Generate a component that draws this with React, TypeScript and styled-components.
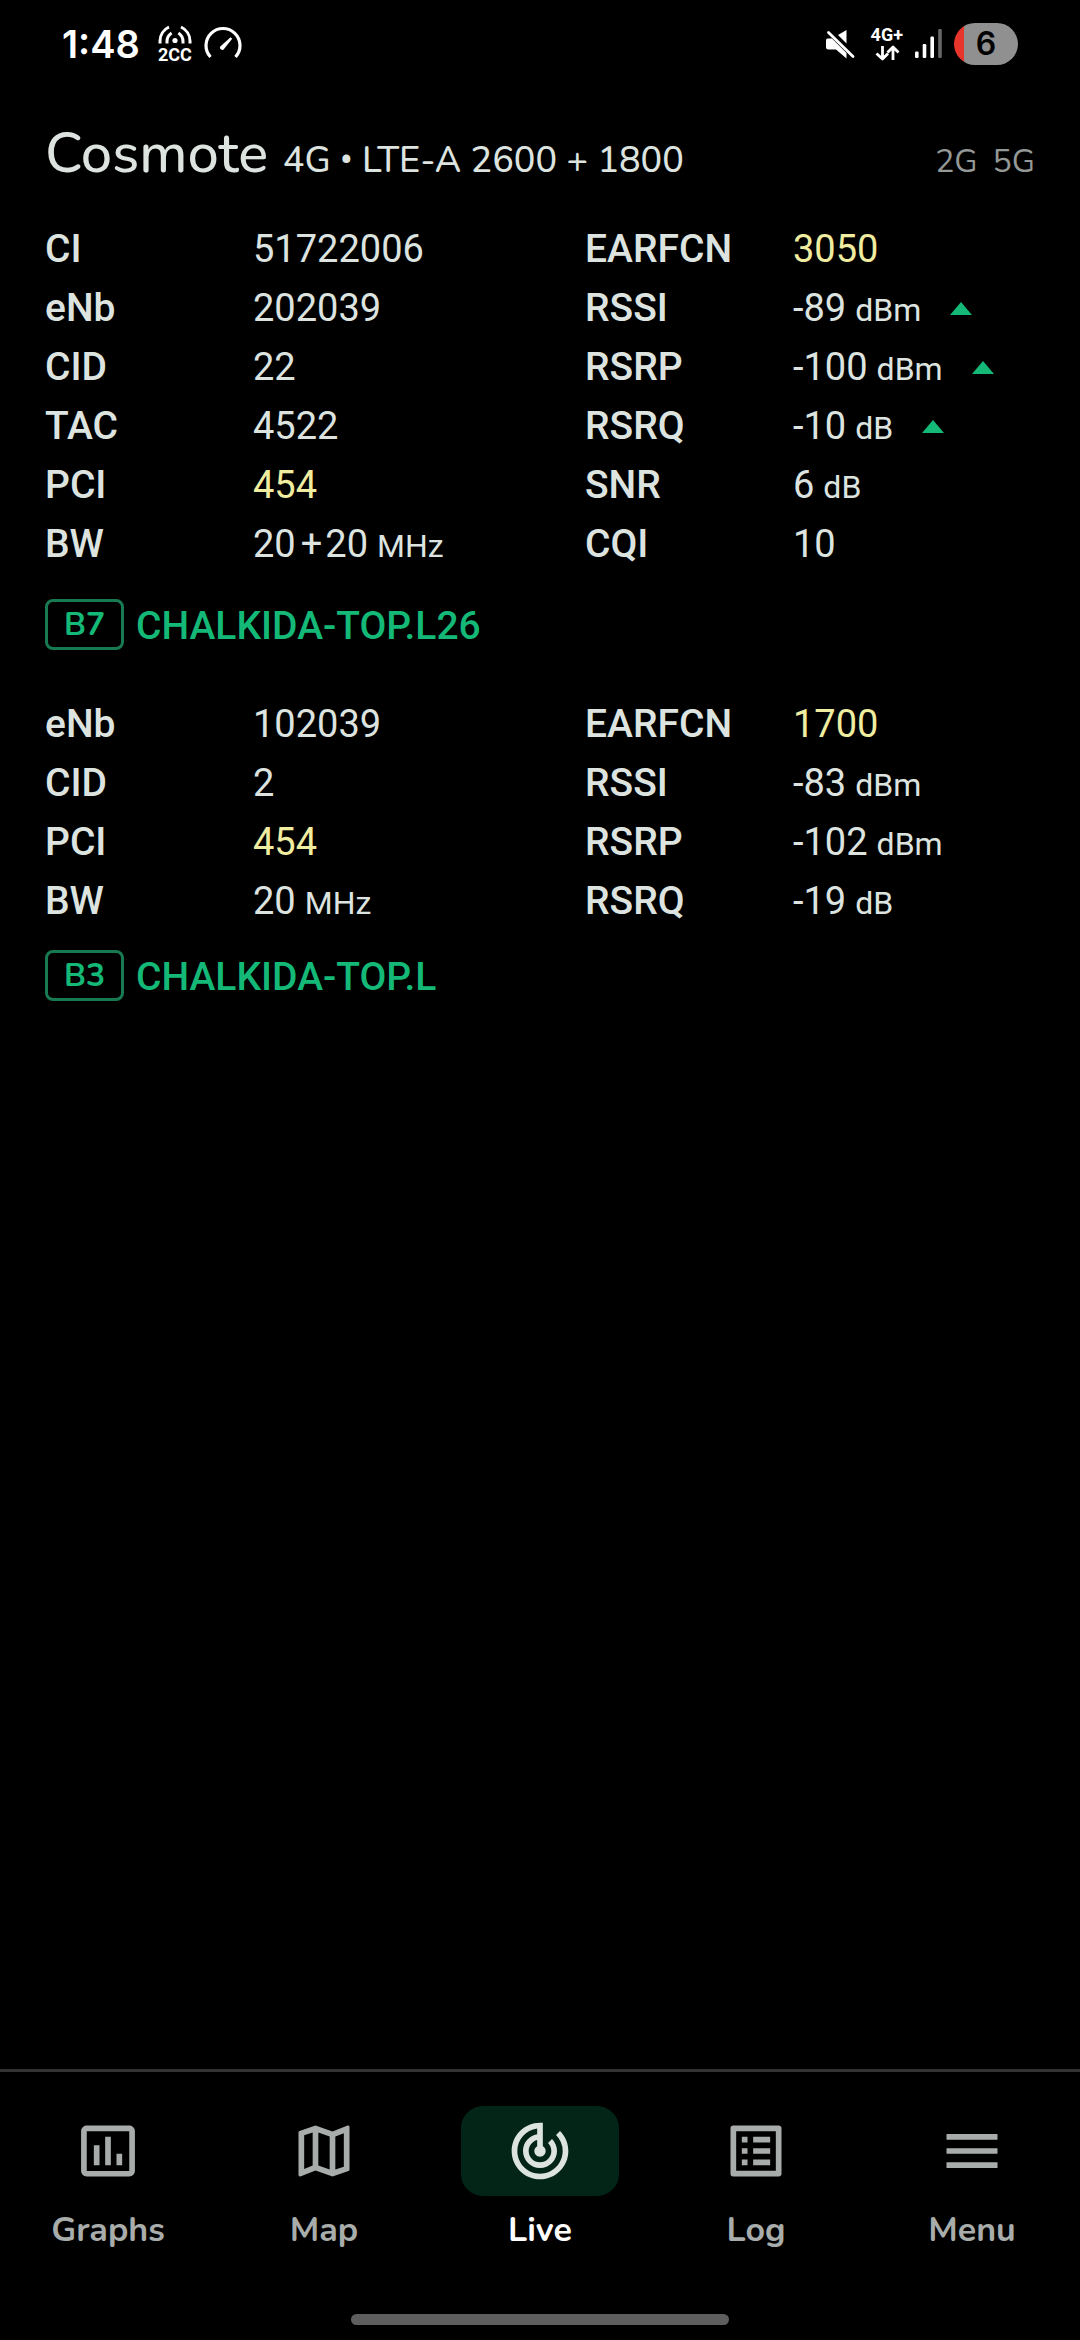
import React, { Fragment, useState } from "react";
import styled, { createGlobalStyle } from "styled-components";
import {
  MdInsertChartOutlined,
  MdListAlt,
  MdMenu,
  MdOutlineMap,
  MdTrackChanges,
} from "react-icons/md";

const color = {
  text: "#dde4e0",
  muted: "#a8adab",
  faint: "#949997",
  yellow: "#f0eca0",
  green: "#14b877",
  greenBorder: "#187a50",
  pill: "#032518",
  line: "#333333",
};

const data = `Roboto, "Liberation Sans", sans-serif`;
const ui = `Nunito, Lato, "Open Sans", sans-serif`;
const system = `Inter, Roboto, sans-serif`;

const GlobalStyle = createGlobalStyle`
  *, *::before, *::after { box-sizing: border-box; }
  body { margin: 0; background: #000; color: ${color.text}; }
  svg { display: block; flex: none; }
`;

const Screen = styled.div`
  display: flex;
  flex-direction: column;
  min-height: 100vh;
  font-family: ${data};
`;

/* ---------- status bar ---------- */

const StatusBar = styled.div`
  display: flex;
  align-items: center;
  justify-content: space-between;
  height: 88px;
  padding: 0 62px;
  color: #fff;
  font-family: ${system};
`;

const StatusGroup = styled.div`
  display: flex;
  align-items: center;
  gap: 12px;
`;

const Clock = styled.time`
  margin-right: 6px;
  font-size: 38px;
  font-weight: 600;
  line-height: 44px;
`;

const StackedIcon = styled.div`
  display: flex;
  flex-direction: column;
  align-items: center;
  gap: 2px;
`;

const TinyLabel = styled.span`
  font-family: Roboto, sans-serif;
  font-size: 18px;
  font-weight: 700;
  line-height: 16px;
`;

const Battery = styled.div`
  display: grid;
  place-items: center;
  width: 64px;
  height: 42px;
  border-radius: 21px;
  background: linear-gradient(90deg, #e8352b 10px, #909090 10px);
  color: #000;
  font-size: 32px;
  font-weight: 600;
  line-height: 42px;
`;

/* ---------- header ---------- */

const Header = styled.header`
  display: flex;
  align-items: baseline;
  justify-content: space-between;
  padding: 34px 45px;
  font-family: ${ui};
  line-height: 64px;
`;

const Operator = styled.h1`
  margin: 0;
  font-size: 56px;
  font-weight: 500;
`;

const Network = styled.span`
  font-size: 36px;
  line-height: 1;
`;

const Bullet = styled.span`
  font-family: ${data};
`;

const OtherNetworks = styled.div`
  display: flex;
  gap: 15px;
  color: ${color.faint};
  font-size: 32px;
  font-weight: 400;
  line-height: 44px;
`;

/* ---------- cells ---------- */

const Main = styled.main`
  display: flex;
  flex: 1;
  flex-direction: column;
  gap: 45px;
  padding: 0 45px;
`;

const Cell = styled.section<{ $gap: number }>`
  display: flex;
  flex-direction: column;
  gap: ${(p) => p.$gap}px;
`;

const Readings = styled.dl`
  display: grid;
  grid-template-columns: 208px 332fr 208px 242fr;
  margin: 0;
  font-size: 38px;
  line-height: 59px;
`;

const Label = styled.dt`
  font-size: 39px;
  font-weight: 500;
`;

const Value = styled.dd<{ $highlight?: boolean }>`
  display: flex;
  align-items: baseline;
  margin: 0;
  color: ${(p) => (p.$highlight ? color.yellow : "inherit")};
  white-space: nowrap;
`;

const Plus = styled.span`
  padding: 0 3px 0 5px;
`;

const Unit = styled.span`
  margin-left: 9px;
  font-size: 32px;
  line-height: 38px;
`;

const Trend = styled.svg`
  align-self: center;
  margin-left: 29px;
  fill: ${color.green};
`;

const Site = styled.div`
  display: flex;
  align-items: center;
  gap: 12px;
  color: ${color.green};
  font-weight: 500;
`;

const Band = styled.span`
  width: 79px;
  border: 3px solid ${color.greenBorder};
  border-radius: 8px;
  font-family: ${ui};
  font-size: 32px;
  font-weight: 700;
  line-height: 45px;
  text-align: center;
`;

const SiteName = styled.span`
  padding-top: 4px;
  font-size: 39px;
  line-height: 47px;
`;

/* ---------- bottom navigation ---------- */

const Nav = styled.nav`
  display: grid;
  grid-template-columns: repeat(5, 1fr);
  padding-top: 34px;
  border-top: 3px solid ${color.line};
`;

const Pill = styled.span<{ $active: boolean }>`
  display: grid;
  place-items: center;
  width: 158px;
  height: 90px;
  border-radius: 22px;
  background: ${(p) => (p.$active ? color.pill : "transparent")};
  color: ${(p) => (p.$active ? color.text : color.muted)};
`;

const NavButton = styled.button<{ $active: boolean }>`
  display: flex;
  flex-direction: column;
  align-items: center;
  gap: 12px;
  padding: 0;
  border: 0;
  background: none;
  color: ${(p) => (p.$active ? "#fff" : color.muted)};
  font-family: ${ui};
  font-size: 34px;
  font-weight: 700;
  line-height: 44px;
  cursor: pointer;
`;

const HomeHandle = styled.div`
  align-self: center;
  width: 35%;
  height: 11px;
  margin: 62px 0 15px;
  border-radius: 6px;
  background: #5e5e5e;
`;

type Reading = {
  label: string;
  value: string;
  plus?: string;
  unit?: string;
  highlight?: boolean;
  rising?: boolean;
};

type CellInfo = { band: string; site: string; gap: number; readings: Reading[] };

const cells: CellInfo[] = [
  {
    band: "B7",
    site: "CHALKIDA-TOP.L26",
    gap: 25,
    readings: [
      { label: "CI", value: "51722006" },
      { label: "EARFCN", value: "3050", highlight: true },
      { label: "eNb", value: "202039" },
      { label: "RSSI", value: "-89", unit: "dBm", rising: true },
      { label: "CID", value: "22" },
      { label: "RSRP", value: "-100", unit: "dBm", rising: true },
      { label: "TAC", value: "4522" },
      { label: "RSRQ", value: "-10", unit: "dB", rising: true },
      { label: "PCI", value: "454", highlight: true },
      { label: "SNR", value: "6", unit: "dB" },
      { label: "BW", value: "20", plus: "20", unit: "MHz" },
      { label: "CQI", value: "10" },
    ],
  },
  {
    band: "B3",
    site: "CHALKIDA-TOP.L",
    gap: 19,
    readings: [
      { label: "eNb", value: "102039" },
      { label: "EARFCN", value: "1700", highlight: true },
      { label: "CID", value: "2" },
      { label: "RSSI", value: "-83", unit: "dBm" },
      { label: "PCI", value: "454", highlight: true },
      { label: "RSRP", value: "-102", unit: "dBm" },
      { label: "BW", value: "20", unit: "MHz" },
      { label: "RSRQ", value: "-19", unit: "dB" },
    ],
  },
];

const tabs = [
  { name: "Graphs", Icon: MdInsertChartOutlined },
  { name: "Map", Icon: MdOutlineMap },
  { name: "Live", Icon: MdTrackChanges },
  { name: "Log", Icon: MdListAlt },
  { name: "Menu", Icon: MdMenu },
];

const Waves = () => (
  <svg width="34" height="20" viewBox="0 0 34 20" fill="none" stroke="#fff" strokeWidth="3">
    <path d="M2 18.5V16C2 10 5.500 4.500 11 2M32 18.500V16C32 10 28.500 4.500 23 2" />
    <path d="M9 18.500V16.500C9 12.500 10.800 9.800 13.600 8M25 18.500V16.500C25 12.500 23.200 9.800 20.400 8" />
    <circle cx="17" cy="15.500" r="2.600" fill="#fff" stroke="none" />
  </svg>
);

const Gauge = () => (
  <svg width="38" height="36" viewBox="0 0 38 36">
    <path d="M6.500 31A17 17 0 1 1 31.500 31" fill="none" stroke="#fff" strokeWidth="3.200" />
    <path d="M16.300 20.600 26.600 11.200 28.200 12.700 19.400 23.700C17.600 24.900 15 22.400 16.300 20.600Z" fill="#fff" />
  </svg>
);

const Muted = () => (
  <svg width="34" height="30" viewBox="0 0 34 30" fill="#fff">
    <path d="M13 6 21.500 1V14.500Z" />
    <path d="M2.500 9.500H7L21.500 24V29.500L11 20.500H3.500Q1 20.500 1 18V11.500Q1 9.500 2.500 9.500Z" />
    <path d="M3.500 3.500 28 27.500" stroke="#fff" strokeWidth="2.800" strokeLinecap="round" />
  </svg>
);

const Arrows = () => (
  <svg width="26" height="16" viewBox="0 0 26 16" fill="none" stroke="#fff" strokeWidth="2.800" strokeLinejoin="round">
    <path d="M8.500 1V14M2.500 8.500 8.500 14 14 8.500M19 15V2M13.500 7.500 19 2 24.500 7.500" />
  </svg>
);

const Signal = () => (
  <svg width="27" height="30" viewBox="0 0 27 30" fill="#fff">
    <rect x="0" y="22.500" width="3.600" height="6.500" rx="1.200" />
    <rect x="7.700" y="15" width="3.600" height="14" rx="1.200" />
    <rect x="15.400" y="7.500" width="3.600" height="21.500" rx="1.200" />
    <rect x="23.200" y="0" width="3.600" height="29" rx="1.200" fill="#666" />
  </svg>
);

export default function App() {
  const [active, setActive] = useState("Live");

  return (
    <Screen>
      <GlobalStyle />
      <StatusBar>
        <StatusGroup>
          <Clock>1:48</Clock>
          <StackedIcon>
            <Waves />
            <TinyLabel>2CC</TinyLabel>
          </StackedIcon>
          <Gauge />
        </StatusGroup>
        <StatusGroup>
          <Muted />
          <StackedIcon>
            <TinyLabel>4G+</TinyLabel>
            <Arrows />
          </StackedIcon>
          <Signal />
          <Battery>6</Battery>
        </StatusGroup>
      </StatusBar>

      <Header>
        <Operator>
          Cosmote{" "}
          <Network>
            4G <Bullet>•</Bullet> LTE-A 2600 + 1800
          </Network>
        </Operator>
        <OtherNetworks>
          <span>2G</span>
          <span>5G</span>
        </OtherNetworks>
      </Header>

      <Main>
        {cells.map((cell) => (
          <Cell key={cell.band} $gap={cell.gap}>
            <Readings>
              {cell.readings.map((r) => (
                <Fragment key={r.label}>
                  <Label>{r.label}</Label>
                  <Value $highlight={r.highlight}>
                    {r.value}
                    {r.plus && (
                      <>
                        <Plus>+</Plus>
                        {r.plus}
                      </>
                    )}
                    {r.unit && <Unit>{r.unit}</Unit>}
                    {r.rising && (
                      <Trend width="22" height="13" viewBox="0 0 22 13" role="img" aria-label="rising">
                        <path d="M11 0 22 13H0Z" />
                      </Trend>
                    )}
                  </Value>
                </Fragment>
              ))}
            </Readings>
            <Site>
              <Band>{cell.band}</Band>
              <SiteName>{cell.site}</SiteName>
            </Site>
          </Cell>
        ))}
      </Main>

      <Nav>
        {tabs.map(({ name, Icon }) => (
          <NavButton
            key={name}
            type="button"
            $active={name === active}
            aria-current={name === active ? "page" : undefined}
            onClick={() => setActive(name)}
          >
            <Pill $active={name === active}>
              <Icon size={68} />
            </Pill>
            {name}
          </NavButton>
        ))}
      </Nav>
      <HomeHandle />
    </Screen>
  );
}
